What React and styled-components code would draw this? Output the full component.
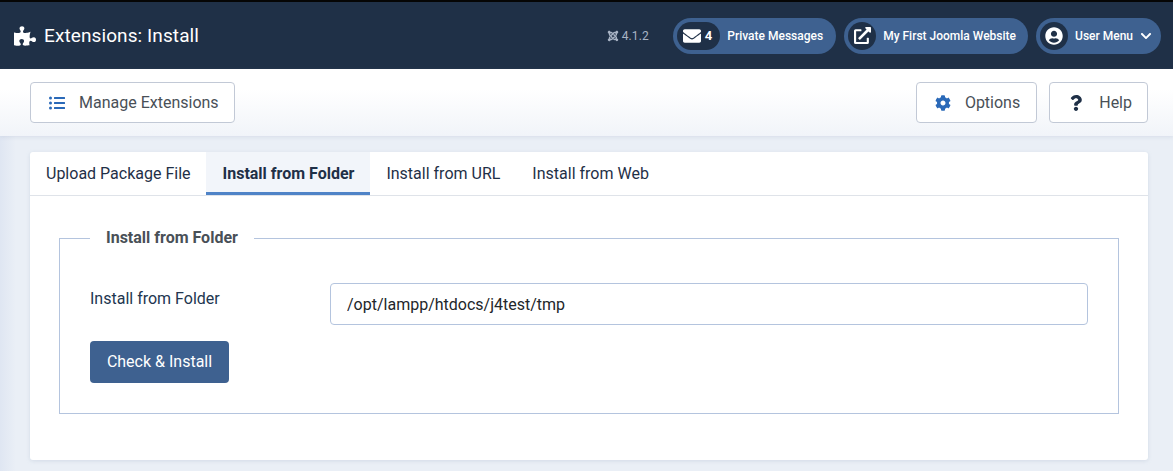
import React from "react";
import styled, { createGlobalStyle } from "styled-components";
import { FaPuzzlePiece, FaEnvelope, FaExternalLinkAlt, FaUserCircle, FaChevronDown, FaListUl, FaCog, FaQuestion, FaJoomla } from "react-icons/fa";

const Global = createGlobalStyle`
  html, body { margin: 0; padding: 0; height: 100%; overflow: hidden; }
  body { font-family: Roboto, "Liberation Sans", sans-serif; background: #eaeff6; color: #22262a; }
  * { box-sizing: border-box; }
`;
const Page = styled.div`
  width: 1173px; height: 471px; overflow: hidden; position: relative; display: flex; flex-direction: column;
  border-top: 2px solid #050505;
  background: linear-gradient(90deg, #dfe6f2 0, #eaeff6 16px);
`;
const Header = styled.header`
  height: 67px; flex: none; background: #1f3047; color: #fff; display: flex; align-items: center; padding: 0 12px 0 14px;
`;
const Title = styled.h1`
  margin: 0 auto 0 0; display: flex; align-items: center; gap: 8px; font-size: 19px; font-weight: 400; letter-spacing: .1px;
  svg { width: 22px; height: 20px; }
`;
const Version = styled.span`
  display: flex; align-items: center; gap: 3px; font-size: 12px; letter-spacing: .1px; color: #a9b4c5; margin-right: 24px;
  svg { width: 12px; height: 12px; }
`;
const Pill = styled.a`
  height: 36px; border-radius: 18px; background: #3e6190; display: flex; align-items: center; padding: 4px; margin-left: ${p => p.$gap ?? 8}px;
  font-size: 12px; font-weight: 500; color: #fff; white-space: nowrap;
`;
const Badge = styled.span`
  height: 28px; min-width: 28px; border-radius: 14px; background: #1f3047; display: flex; align-items: center; justify-content: center; gap: 4px;
  padding: 0 ${p => p.$wide ? 8 : 0}px 0 ${p => p.$wide ? 6 : 0}px; font-size: 13px; font-weight: 700;
`;
const PillLabel = styled.span`
  margin: 0 ${p => p.$end}px 0 ${p => p.$start}px;
`;
const Chevron = styled(FaChevronDown)`
  width: 12px; height: 12px; margin-right: 5px;
`;
const Toolbar = styled.div`
  height: 67px; flex: none; background: linear-gradient(180deg, #fff 30%, #f1f4f9 100%); display: flex; align-items: center; padding: 0 25px 0 30px; gap: 12px;
  box-shadow: 0 1px 4px rgba(120,140,170,.18); z-index: 1;
`;
const ToolButton = styled.button`
  height: 41px; background: #fff; border: 1px solid #c2c9d6; border-radius: 4px; display: flex; align-items: center; font: 400 16px Roboto, sans-serif; color: #495057;
  padding: 0 ${p => p.$right || 15}px 0 ${p => p.$left || 18}px; gap: ${p => p.$iconGap || 14}px; margin: 0 0 0 ${p => p.$auto ? "auto" : 0};
  svg { color: ${p => p.$iconColor || "#2a69b8"}; width: 16px; height: 16px; flex: none; }
`;
const Main = styled.main`
  flex: 1; padding: 16px 25px 11px 30px; min-height: 0;
`;
const Card = styled.section`
  background: #fff; border-radius: 3px; height: 100%; box-shadow: 0 1px 4px rgba(120,140,170,.2);
`;
const Tabs = styled.nav`
  height: 44px; display: flex; border-bottom: 1px solid #dfe3e9;
`;
const Tab = styled.a`
  height: 43px; display: flex; align-items: center; padding: 0 16px; font-size: 16px; color: #1f3047;
  ${p => p.$active && `
    font-weight: 700; background: #f2f5fa; box-shadow: inset 0 -3px 0 #4f83c7; margin-left: -1px; padding-left: 17px;
  `}
`;
const Body = styled.div`
  padding: 32px 29px 0;
`;
const Fieldset = styled.fieldset`
  margin: 0; padding: 29px 30px 30px; height: 186px; border: 1px solid #b4c4de; border-radius: 0; min-width: 0;
`;
const Legend = styled.legend`
  margin: 0; padding: 0 16px 2px; font-size: 16px; line-height: 19px; font-weight: 700; color: #495057;
`;
const Row = styled.div`
  display: flex; align-items: flex-start; margin-top: 5px; margin-bottom: 16px;
`;
const Label = styled.label`
  width: 240px; flex: none; font-size: 16px; line-height: 24px; color: #22364f; padding-top: 4px;
`;
const Input = styled.input`
  flex: 1; height: 42px; border: 1px solid #b4c4de; border-radius: 4px; padding: 0 16px; font: 400 16px Roboto, sans-serif; color: #22262a; background: #fff; outline: none;
`;
const Submit = styled.button`
  height: 42px; width: 139px; border: 0; border-radius: 4px; padding: 0 0 2px; background: #3e6190; color: #fff; font: 400 16px Roboto, sans-serif; display: block;
`;

export default function App() {
  return (
    <Page>
      <Global />
      <Header>
        <Title><FaPuzzlePiece />Extensions: Install</Title>
        <Version><FaJoomla />4.1.2</Version>
        <Pill $gap={0}>
          <Badge $wide><FaEnvelope size={18} />4</Badge>
          <PillLabel $start={7} $end={9}>Private Messages</PillLabel>
        </Pill>
        <Pill>
          <Badge><FaExternalLinkAlt size={17} /></Badge>
          <PillLabel $start={7} $end={8}>My First Joomla Website</PillLabel>
        </Pill>
        <Pill>
          <Badge><FaUserCircle size={18} /></Badge>
          <PillLabel $start={7} $end={7}>User Menu</PillLabel>
          <Chevron />
        </Pill>
      </Header>
      <Toolbar>
        <ToolButton><FaListUl />Manage Extensions</ToolButton>
        <ToolButton $auto $right={16}><FaCog />Options</ToolButton>
        <ToolButton $iconColor="#1f3047" $left={18} $iconGap={15}><FaQuestion />Help</ToolButton>
      </Toolbar>
      <Main>
        <Card>
          <Tabs>
            <Tab>Upload Package File</Tab>
            <Tab $active>Install from Folder</Tab>
            <Tab>Install from URL</Tab>
            <Tab>Install from Web</Tab>
          </Tabs>
          <Body>
            <Fieldset>
              <Legend>Install from Folder</Legend>
              <Row>
                <Label>Install from Folder</Label>
                <Input defaultValue="/opt/lampp/htdocs/j4test/tmp" />
              </Row>
              <Submit>Check &amp; Install</Submit>
            </Fieldset>
          </Body>
        </Card>
      </Main>
    </Page>
  );
}
